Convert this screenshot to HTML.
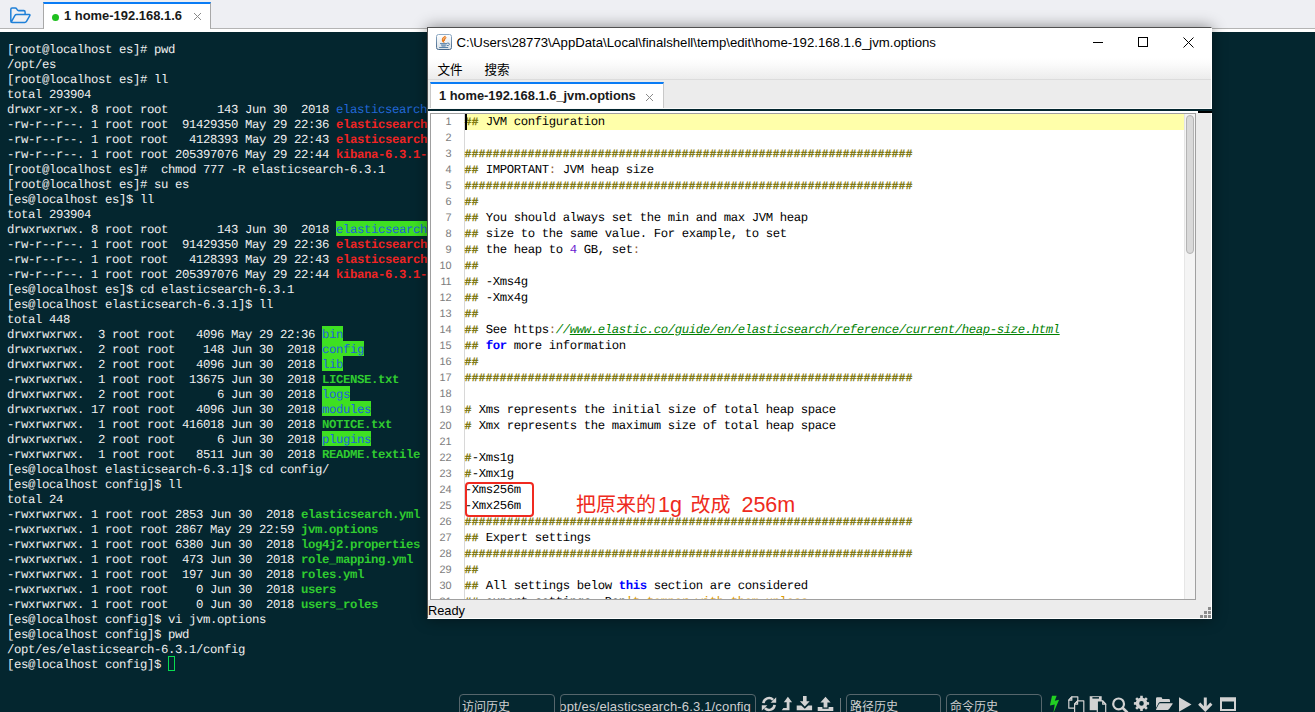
<!DOCTYPE html>
<html lang="zh-CN">
<head>
<meta charset="utf-8">
<title>FinalShell - jvm.options</title>
<style>
html,body{margin:0;padding:0;}
body{width:1315px;height:712px;overflow:hidden;position:relative;background:#04262f;font-family:"Liberation Sans","Noto Sans CJK SC",sans-serif;}
.abs{position:absolute;}
/* top bar */
#topbar{left:0;top:0;width:1315px;height:28px;background:#eeeff3;}
#topline{left:0;top:28px;width:1315px;height:1px;background:#b4b4b4;}
#topwhite{left:0;top:29px;width:1315px;height:3px;background:#ffffff;}
#tab1{left:43px;top:2px;width:168px;height:27px;background:#fff;box-sizing:border-box;border-left:1px solid #a8a8a8;border-right:1px solid #a8a8a8;border-top:2px solid #0a7cf5;}
#tab1 .dot{left:8px;top:10px;width:7px;height:7px;border-radius:50%;background:#1fc01f;}
#tab1 .txt{left:20px;top:4px;font-weight:bold;font-size:12.95px;line-height:16px;color:#1a1a1a;white-space:nowrap;}
/* terminal */
#term{left:7px;top:43px;color:#f0f0f0;font-family:"Liberation Mono",monospace;font-size:12.300px;letter-spacing:-0.380px;text-rendering:geometricPrecision;line-height:15px;}
.tl{height:15px;white-space:pre;}
.b{color:#2268d8;}
.r{color:#f02424;font-weight:bold;}
.g{color:#30cc30;font-weight:bold;}
.gb{color:#1f62dc;}
.gr{background:#3ee022;height:15px;}
.cur{position:absolute;left:168px;top:656px;width:7px;height:15px;box-sizing:border-box;border:1px solid #08dc50;}
/* editor window */
#win{left:427px;top:27px;width:785px;height:592px;background:#ececec;box-shadow:0 0 14px rgba(0,0,0,.45);}
#winb{left:0;top:0;width:785px;height:592px;box-sizing:border-box;border-left:1px solid #505050;border-top:1px solid #505050;border-right:1px solid #fff;border-bottom:1px solid #fff;pointer-events:none;}
#title{left:1px;top:1px;width:784px;height:30px;background:#fff;}
#title .txt{left:28.500px;top:6px;font-size:13.2px;line-height:18px;color:#000;white-space:nowrap;}
#menubar{left:1px;top:31px;width:784px;height:21px;background:linear-gradient(#ffffff,#fbfbfb 30%,#ececec);}
#menuline{left:1px;top:52px;width:784px;height:1px;background:#dcdcdc;}
#menubar .m{top:5px;font-size:12.600px;line-height:14px;color:#000;white-space:nowrap;}
#etab{left:3px;top:55px;width:234px;height:27px;background:#fff;box-sizing:border-box;border-left:1px solid #c8c8c8;border-right:1px solid #c8c8c8;border-top:2px solid #0a7cf5;}
#etab .txt{left:8px;top:4px;font-weight:bold;font-size:12.880px;line-height:16px;color:#1a1a1a;white-space:nowrap;}
#darkline{left:1px;top:82px;width:784px;height:2px;background:#04262f;}
#blk{left:771px;top:84px;width:14px;height:2px;background:#000;}
#edwrap{left:1px;top:84px;width:770px;height:2px;background:#fff;}
#edwrap2{left:1px;top:84px;width:2px;height:489px;background:#fff;}
#edbox{left:3px;top:86px;width:766px;height:487px;box-sizing:border-box;border:1px solid #a0a0a0;background:#fff;overflow:hidden;}
#hl{left:35px;top:0;width:720px;height:16px;background:#ffffaa;}
#gsep{left:33px;top:0;width:1px;height:486px;background:#d8d8d8;}
#caret{left:34px;top:0;width:2px;height:16px;background:#000;}
#lines{left:0;top:0px;font-family:"Liberation Mono",monospace;font-size:12.300px;letter-spacing:-0.380px;text-rendering:geometricPrecision;line-height:16px;color:#000;}
.el{height:16px;padding-left:33.700px;position:relative;white-space:pre;}
.ln{position:absolute;left:0;top:0;width:20.500px;text-align:right;color:#7d7d7d;font-family:"Liberation Sans",sans-serif;font-size:10.900px;letter-spacing:-0.100px;}
.h{color:#787200;font-size:11px;letter-spacing:0.400px;-webkit-text-stroke:0.350px #787200;}
.o{color:#946040;}
.n{color:#6a1ad0;}
.k{color:#0000ff;font-weight:bold;}
.c{color:#008000;font-style:italic;}
.c u{text-decoration:underline;}
.s{color:#dc9a00;}
#sbtrack{left:753px;top:0;width:11px;height:486px;background:#f4f4f4;border-left:1px solid #e6e6e6;box-sizing:border-box;}
#sbthumb{left:755px;top:1px;width:8px;height:139px;box-sizing:border-box;background:#d9d9d9;border:1px solid #b4b4b4;border-radius:4px;}
#status{left:1px;top:576px;font-size:12.800px;line-height:16px;color:#000;}
#annot{left:38px;top:455px;width:69px;height:35px;box-sizing:border-box;border:2px solid #f02a20;border-radius:4px;}
#annot-t{left:149px;top:463.700px;font-size:20px;line-height:28px;color:#ee2a20;white-space:nowrap;font-family:"Liberation Sans","Noto Sans CJK SC",sans-serif;}
.la{font-size:21.500px;}
.grip{width:3px;height:3px;background:#8c8c8c;}
/* bottom bar */
.bx{top:694px;height:22px;box-sizing:border-box;border:1px solid #56666c;border-radius:4px;color:#cfcfcf;font-size:12px;line-height:20px;white-space:nowrap;overflow:hidden;}
.bx span{position:absolute;top:2px;}
svg{display:block;}
</style>
</head>
<body>
<div id="topbar" class="abs"></div>
<div id="topline" class="abs"></div>
<div id="topwhite" class="abs"></div>
<svg class="abs" style="left:9px;top:6px" width="23" height="19" viewBox="0 0 23 18" preserveAspectRatio="none"><path d="M1.8 14.2V3.2q0-1.3 1.3-1.3h3.2q.9 0 1.4.8l.6 1q.4.7 1.300.7h5.200q1.300 0 1.300 1.300v2.200M2.200 15.200l3.600-6.100q.6-1 1.800-1h12.600q1.200 0 .6 1l-3.300 5.500q-.6 1-1.800 1H3.100q-1.300 0-1.300-1.400" fill="none" stroke="#1f80d8" stroke-width="1.5" stroke-linejoin="round" stroke-linecap="round"/></svg>
<div class="abs" style="left:44px;top:28px;width:166px;height:2px;background:#fff"></div>
<div id="tab1" class="abs"><div class="dot abs"></div><div class="txt abs">1 home-192.168.1.6</div>
<svg class="abs" style="left:148.500px;top:8px" width="9" height="9" viewBox="0 0 9 9"><path d="M1 1l7 7M8 1l-7 7" stroke="#8a8a8a" stroke-width="1" fill="none"/></svg></div>

<div class="gr abs" style="left:336px;top:221px;width:133px"></div>
<div class="gr abs" style="left:322px;top:326px;width:21px"></div>
<div class="gr abs" style="left:322px;top:341px;width:42px"></div>
<div class="gr abs" style="left:322px;top:356px;width:21px"></div>
<div class="gr abs" style="left:322px;top:386px;width:28px"></div>
<div class="gr abs" style="left:322px;top:401px;width:49px"></div>
<div class="gr abs" style="left:322px;top:431px;width:49px"></div>
<div class="cur"></div>
<div id="term" class="abs">
<div class="tl">[root@localhost es]# pwd</div>
<div class="tl">/opt/es</div>
<div class="tl">[root@localhost es]# ll</div>
<div class="tl">total 293904</div>
<div class="tl">drwxr-xr-x. 8 root root       143 Jun 30  2018 <span class="b">elasticsearch-6.3.1</span></div>
<div class="tl">-rw-r--r--. 1 root root  91429350 May 29 22:36 <span class="r">elasticsearch-6.3.1.tar.gz</span></div>
<div class="tl">-rw-r--r--. 1 root root   4128393 May 29 22:43 <span class="r">elasticsearch-analysis-ik-6.3.1.zip</span></div>
<div class="tl">-rw-r--r--. 1 root root 205397076 May 29 22:44 <span class="r">kibana-6.3.1-linux-x86_64.tar.gz</span></div>
<div class="tl">[root@localhost es]#  chmod 777 -R elasticsearch-6.3.1</div>
<div class="tl">[root@localhost es]# su es</div>
<div class="tl">[es@localhost es]$ ll</div>
<div class="tl">total 293904</div>
<div class="tl">drwxrwxrwx. 8 root root       143 Jun 30  2018 <span class="gb">elasticsearch-6.3.1</span></div>
<div class="tl">-rw-r--r--. 1 root root  91429350 May 29 22:36 <span class="r">elasticsearch-6.3.1.tar.gz</span></div>
<div class="tl">-rw-r--r--. 1 root root   4128393 May 29 22:43 <span class="r">elasticsearch-analysis-ik-6.3.1.zip</span></div>
<div class="tl">-rw-r--r--. 1 root root 205397076 May 29 22:44 <span class="r">kibana-6.3.1-linux-x86_64.tar.gz</span></div>
<div class="tl">[es@localhost es]$ cd elasticsearch-6.3.1</div>
<div class="tl">[es@localhost elasticsearch-6.3.1]$ ll</div>
<div class="tl">total 448</div>
<div class="tl">drwxrwxrwx.  3 root root   4096 May 29 22:36 <span class="gb">bin</span></div>
<div class="tl">drwxrwxrwx.  2 root root    148 Jun 30  2018 <span class="gb">config</span></div>
<div class="tl">drwxrwxrwx.  2 root root   4096 Jun 30  2018 <span class="gb">lib</span></div>
<div class="tl">-rwxrwxrwx.  1 root root  13675 Jun 30  2018 <span class="g">LICENSE.txt</span></div>
<div class="tl">drwxrwxrwx.  2 root root      6 Jun 30  2018 <span class="gb">logs</span></div>
<div class="tl">drwxrwxrwx. 17 root root   4096 Jun 30  2018 <span class="gb">modules</span></div>
<div class="tl">-rwxrwxrwx.  1 root root 416018 Jun 30  2018 <span class="g">NOTICE.txt</span></div>
<div class="tl">drwxrwxrwx.  2 root root      6 Jun 30  2018 <span class="gb">plugins</span></div>
<div class="tl">-rwxrwxrwx.  1 root root   8511 Jun 30  2018 <span class="g">README.textile</span></div>
<div class="tl">[es@localhost elasticsearch-6.3.1]$ cd config/</div>
<div class="tl">[es@localhost config]$ ll</div>
<div class="tl">total 24</div>
<div class="tl">-rwxrwxrwx. 1 root root 2853 Jun 30  2018 <span class="g">elasticsearch.yml</span></div>
<div class="tl">-rwxrwxrwx. 1 root root 2867 May 29 22:59 <span class="g">jvm.options</span></div>
<div class="tl">-rwxrwxrwx. 1 root root 6380 Jun 30  2018 <span class="g">log4j2.properties</span></div>
<div class="tl">-rwxrwxrwx. 1 root root  473 Jun 30  2018 <span class="g">role_mapping.yml</span></div>
<div class="tl">-rwxrwxrwx. 1 root root  197 Jun 30  2018 <span class="g">roles.yml</span></div>
<div class="tl">-rwxrwxrwx. 1 root root    0 Jun 30  2018 <span class="g">users</span></div>
<div class="tl">-rwxrwxrwx. 1 root root    0 Jun 30  2018 <span class="g">users_roles</span></div>
<div class="tl">[es@localhost config]$ vi jvm.options</div>
<div class="tl">[es@localhost config]$ pwd</div>
<div class="tl">/opt/es/elasticsearch-6.3.1/config</div>
<div class="tl">[es@localhost config]$ </div>
</div>

<div id="win" class="abs">
 <div id="title" class="abs">
  <svg class="abs" style="left:8px;top:6px" width="16" height="16" viewBox="0 0 16 16"><defs><linearGradient id="jg" x1="0" y1="0" x2="0" y2="1"><stop offset="0" stop-color="#ffffff"/><stop offset="1" stop-color="#d9e0e6"/></linearGradient><linearGradient id="jb" x1="0" y1="0" x2="0" y2="1"><stop offset="0" stop-color="#8fabc6"/><stop offset="1" stop-color="#45678a"/></linearGradient></defs><rect x=".5" y=".5" width="15" height="15" rx="2" fill="url(#jg)" stroke="url(#jb)"/><path d="M9.200 2.300q-3 1.900-2.900 3.600t1.300 2.200q-.7-1.400.300-2.600t2.400-2.100q-1.900 1.600-1.900 3" fill="none" stroke="#e87a1c" stroke-width="1.100" stroke-linecap="round"/><path d="M4 9.600h7.200M5 11h5.400M5.600 12.100h4M3.200 13.500h9" stroke="#4877a3" stroke-width=".9" fill="none"/><path d="M11.200 9q2.500-.1 2.300 1.300t-2.700 1.300" fill="none" stroke="#4877a3" stroke-width=".9"/></svg>
  <div class="txt abs">C:\Users\28773\AppData\Local\finalshell\temp\edit\home-192.168.1.6_jvm.options</div>
  <div class="abs" style="left:665px;top:14px;width:10px;height:1px;background:#000"></div>
  <div class="abs" style="left:710px;top:9px;width:10px;height:10px;box-sizing:border-box;border:1px solid #000"></div>
  <svg class="abs" style="left:755px;top:9px" width="11" height="11" viewBox="0 0 11 11"><path d="M.5.500l10 10M10.500.500l-10 10" stroke="#000" stroke-width="1" fill="none"/></svg>
 </div>
 <div id="menubar" class="abs"><div class="m abs" style="left:9.500px">文件</div><div class="m abs" style="left:56.500px">搜索</div></div>
 <div id="menuline" class="abs"></div>
 <div id="etab" class="abs"><div class="txt abs">1 home-192.168.1.6_jvm.options</div>
 <svg class="abs" style="left:214px;top:9px" width="9" height="9" viewBox="0 0 9 9"><path d="M1 1l7 7M8 1l-7 7" stroke="#8a8a8a" stroke-width="1" fill="none"/></svg></div>
 <div id="edwrap" class="abs"></div><div id="edwrap2" class="abs"></div>
 <div id="edbox" class="abs">
  <div id="hl" class="abs"></div>
  <div id="gsep" class="abs"></div>
  <div id="lines" class="abs">
<div class="el"><span class="ln">1</span><span class="h">##</span> JVM configuration</div>
<div class="el"><span class="ln">2</span></div>
<div class="el"><span class="ln">3</span><span class="h">################################################################</span></div>
<div class="el"><span class="ln">4</span><span class="h">##</span> IMPORTANT<span class="o">:</span> JVM heap size</div>
<div class="el"><span class="ln">5</span><span class="h">################################################################</span></div>
<div class="el"><span class="ln">6</span><span class="h">##</span></div>
<div class="el"><span class="ln">7</span><span class="h">##</span> You should always set the min and max JVM heap</div>
<div class="el"><span class="ln">8</span><span class="h">##</span> size to the same value. For example, to set</div>
<div class="el"><span class="ln">9</span><span class="h">##</span> the heap to <span class="n">4</span> GB, set<span class="o">:</span></div>
<div class="el"><span class="ln">10</span><span class="h">##</span></div>
<div class="el"><span class="ln">11</span><span class="h">##</span> -Xms4g</div>
<div class="el"><span class="ln">12</span><span class="h">##</span> -Xmx4g</div>
<div class="el"><span class="ln">13</span><span class="h">##</span></div>
<div class="el"><span class="ln">14</span><span class="h">##</span> See https<span class="o">:</span><span class="c">//<u>www.elastic.co/guide/en/elasticsearch/reference/current/heap-size.html</u></span></div>
<div class="el"><span class="ln">15</span><span class="h">##</span> <span class="k">for</span> more information</div>
<div class="el"><span class="ln">16</span><span class="h">##</span></div>
<div class="el"><span class="ln">17</span><span class="h">################################################################</span></div>
<div class="el"><span class="ln">18</span></div>
<div class="el"><span class="ln">19</span><span class="h">#</span> Xms represents the initial size of total heap space</div>
<div class="el"><span class="ln">20</span><span class="h">#</span> Xmx represents the maximum size of total heap space</div>
<div class="el"><span class="ln">21</span></div>
<div class="el"><span class="ln">22</span><span class="h">#</span>-Xms1g</div>
<div class="el"><span class="ln">23</span><span class="h">#</span>-Xmx1g</div>
<div class="el"><span class="ln">24</span>-Xms256m</div>
<div class="el"><span class="ln">25</span>-Xmx256m</div>
<div class="el"><span class="ln">26</span><span class="h">################################################################</span></div>
<div class="el"><span class="ln">27</span><span class="h">##</span> Expert settings</div>
<div class="el"><span class="ln">28</span><span class="h">################################################################</span></div>
<div class="el"><span class="ln">29</span><span class="h">##</span></div>
<div class="el"><span class="ln">30</span><span class="h">##</span> All settings below <span class="k">this</span> section are considered</div>
<div class="el"><span class="ln">31</span><span class="h">##</span> expert settings. Don<span class="s">'t tamper with them unless</span></div>
  </div>
  <div id="caret" class="abs"></div>
  <div id="sbtrack" class="abs"></div>
  <div id="sbthumb" class="abs"></div>
 </div>
 <div id="annot" class="abs"></div>
 <div id="annot-t" class="abs">把原来的<span class="la" style="margin-left:2px">1g</span><span style="margin-left:8.500px">改成</span><span class="la" style="margin-left:11px">256m</span></div>
 <div id="status" class="abs">Ready</div>
 <div class="grip abs" style="left:781px;top:580px"></div>
 <div class="grip abs" style="left:777px;top:584px"></div><div class="grip abs" style="left:781px;top:584px"></div>
 <div class="grip abs" style="left:773px;top:588px"></div><div class="grip abs" style="left:777px;top:588px"></div><div class="grip abs" style="left:781px;top:588px"></div>
 <div id="winb" class="abs"></div>
 <div class="abs" style="left:1px;top:81px;width:784px;height:1px;background:#fafafa"></div>
 <div id="darkline" class="abs"></div>
 <div id="blk" class="abs"></div>
</div>

<!-- bottom bar -->
<div class="bx abs" style="left:459px;width:96px"><span style="left:2px">访问历史</span></div>
<div class="bx abs" style="left:560px;width:196px"><span style="right:4px;font-size:13px;letter-spacing:0.160px">/opt/es/elasticsearch-6.3.1/config</span></div>
<div class="abs" style="left:840px;top:698px;width:1px;height:14px;background:#6a767a"></div>
<div class="bx abs" style="left:846px;width:95px"><span style="left:3px">路径历史</span></div>
<div class="bx abs" style="left:946px;width:96px"><span style="left:3px">命令历史</span></div>
<!--ICONS-START-->
<svg class="abs" style="left:756px;top:690px" width="484" height="22" viewBox="756 690 484 22">
<g fill="#d2d2d2" stroke="none">
<!-- refresh -->
<path d="M763.400 703.200a5.600 5.600 0 0 1 9.700-3.300" fill="none" stroke="#d2d2d2" stroke-width="2.600"/>
<path d="M776.200 697.200v5.600h-5.600z"/>
<path d="M774.600 704.800a5.600 5.600 0 0 1-9.700 3.300" fill="none" stroke="#d2d2d2" stroke-width="2.600"/>
<path d="M761.800 710.800v-5.600h5.600z"/>
<!-- level up -->
<path d="M787.900 696.800l4.200 5.400h-2.600v8.100h-7.800l1.700-2.200h3.300v-5.900h-2.900z"/>
<!-- download -->
<path d="M803 696h3.600v5.200h3.100l-4.900 5.300-4.900-5.300h3.100z"/>
<path d="M796.700 705.600h4.600l3.500 3.200 3.500-3.200h3.800v4.600h-15.400z"/>
<!-- upload -->
<path d="M825.500 696.800l5.100 5.700h-3.200v5h-3.800v-5h-3.200z"/>
<path d="M817.700 707.100h4.700v1.600h6.200v-1.600h4.700v4h-15.600z"/>
<!-- search -->
<circle cx="1118.600" cy="703.900" r="5.400" fill="none" stroke="#d2d2d2" stroke-width="2.200"/>
<path d="M1122.300 707.500l5.200 5.200" fill="none" stroke="#d2d2d2" stroke-width="2.600"/>
<!-- gear -->
<path fill-rule="evenodd" d="M1147.14 702.05 L1149.10 702.14 L1149.10 704.66 L1147.14 704.75 L1146.45 706.43 L1147.76 707.88 L1145.98 709.66 L1144.53 708.35 L1142.85 709.04 L1142.76 711.00 L1140.24 711.00 L1140.15 709.04 L1138.47 708.35 L1137.02 709.66 L1135.24 707.88 L1136.55 706.43 L1135.86 704.75 L1133.90 704.66 L1133.90 702.14 L1135.86 702.05 L1136.55 700.37 L1135.24 698.92 L1137.02 697.14 L1138.47 698.45 L1140.15 697.76 L1140.24 695.80 L1142.76 695.80 L1142.85 697.76 L1144.53 698.45 L1145.98 697.14 L1147.76 698.92 L1146.45 700.37Z M1139.20 703.40 a2.30 2.30 0 1 0 4.60 0 a2.30 2.30 0 1 0 -4.60 0Z"/>
<!-- folder open -->
<path d="M1156 708v-9.400q0-1.300 1.300-1.300h3.600q1.300 0 1.300 1.300v.5h6.500q1.300 0 1.300 1.300v1.500h-9.500q-1.200 0-1.900 1.100z"/>
<path d="M1160 703.200h12.200q.9 0 .4.800l-3.400 5.100q-.5.800-1.500.8h-11.200q-.8 0-.4-.7l2.800-5.200q.4-.8 1.100-.8z"/>
<!-- play -->
<path d="M1179 697.300l12.500 7.200-12.500 7.200z"/>
<!-- arrow down -->
<path d="M1205.300 697.500v11" fill="none" stroke="#d2d2d2" stroke-width="3"/>
<path d="M1199.200 703.600l6.100 6.200 6.100-6.200" fill="none" stroke="#d2d2d2" stroke-width="3"/>
<!-- window -->
<path fill-rule="evenodd" d="M1220 697.200h16v13.700h-16z M1222 701.400h12v7.500h-12z"/>
</g>
<!-- bolt -->
<path d="M1052 695.800h4.700l-1.900 4.900 4.300-1-5.700 13.300 1.300-8.500-4.800 1.100z" fill="#22d022"/>
<!-- copy -->
<g fill="#04262f" stroke="#d2d2d2" stroke-width="1.200" stroke-linejoin="round">
<path d="M1071.800 696.800h6v11.400h-9v-8z"/><path d="M1071.800 696.800v3.400h-3z" fill="none"/>
<path d="M1077.600 700.900h6.200v12h-9.200v-8.900z"/><path d="M1077.600 700.900v3.300h-3z" fill="none"/>
</g>
<!-- paste -->
<path d="M1089.700 696.200h12v14h-12z" fill="#d2d2d2"/>
<path d="M1092.400 697.100h6.600v1.500h-6.600z" fill="#04262f"/>
<g fill="#04262f" stroke="#d2d2d2" stroke-width="1.200" stroke-linejoin="round">
<path d="M1097.300 700.900h5.400l3 3.200v8.800h-8.400z"/><path d="M1102.700 700.900v3.300h3z" fill="none"/>
</g>
</svg>
<!--ICONS-END-->
</body>
</html>
